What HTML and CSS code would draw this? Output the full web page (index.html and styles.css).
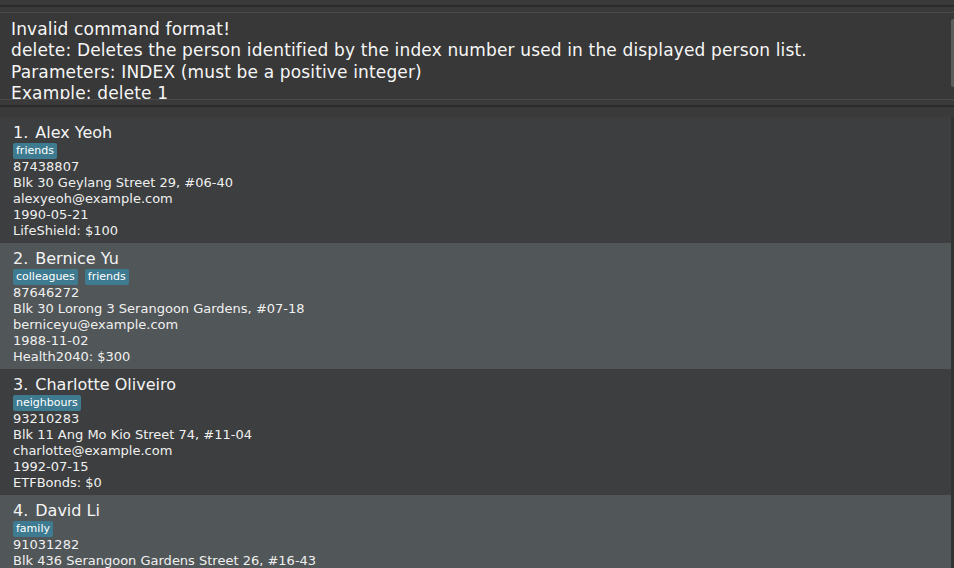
FILE: index.html
```html
<!DOCTYPE html>
<html lang="en">
<head>
<meta charset="utf-8">
<title>Address Book</title>
<link rel="stylesheet" href="styles.css">
</head>
<body>
<div class="app">
  <div class="strip strip-top"></div>
  <div class="sep-dark"></div>
  <div class="strip strip-mid"></div>
  <div class="result-pane">
    <div class="result-text">
      <div class="result-line">Invalid command format!</div>
      <div class="result-line">delete: Deletes the person identified by the index number used in the displayed person list.</div>
      <div class="result-line">Parameters: INDEX (must be a positive integer)</div>
      <div class="result-line">Example: delete 1</div>
    </div>
    <div class="scroll-thumb"></div>
  </div>
  <div class="strip strip-low"></div>
  <div class="sep-dark"></div>
  <div class="list-pane">
    <div class="list">
      <div class="card card-even">
        <div class="name"><span class="idx">1.</span>Alex Yeoh</div>
        <div class="tags"><span class="tag">friends</span></div>
        <div class="detail">87438807</div>
        <div class="detail">Blk 30 Geylang Street 29, #06-40</div>
        <div class="detail">alexyeoh@example.com</div>
        <div class="detail">1990-05-21</div>
        <div class="detail">LifeShield: $100</div>
      </div>
      <div class="card card-odd">
        <div class="name"><span class="idx">2.</span>Bernice Yu</div>
        <div class="tags"><span class="tag">colleagues</span><span class="tag">friends</span></div>
        <div class="detail">87646272</div>
        <div class="detail">Blk 30 Lorong 3 Serangoon Gardens, #07-18</div>
        <div class="detail">berniceyu@example.com</div>
        <div class="detail">1988-11-02</div>
        <div class="detail">Health2040: $300</div>
      </div>
      <div class="card card-even">
        <div class="name"><span class="idx">3.</span>Charlotte Oliveiro</div>
        <div class="tags"><span class="tag">neighbours</span></div>
        <div class="detail">93210283</div>
        <div class="detail">Blk 11 Ang Mo Kio Street 74, #11-04</div>
        <div class="detail">charlotte@example.com</div>
        <div class="detail">1992-07-15</div>
        <div class="detail">ETFBonds: $0</div>
      </div>
      <div class="card card-odd">
        <div class="name"><span class="idx">4.</span>David Li</div>
        <div class="tags"><span class="tag">family</span></div>
        <div class="detail">91031282</div>
        <div class="detail">Blk 436 Serangoon Gardens Street 26, #16-43</div>
        <div class="detail">lidavid@example.com</div>
        <div class="detail">1985-02-10</div>
        <div class="detail">Medisave: $50</div>
      </div>
    </div>
    <div class="list-track"></div>
  </div>
</div>
</body>
</html>
```
FILE: styles.css
```css
* { box-sizing: border-box; }
html, body {
  margin: 0;
  padding: 0;
  background: #383838;
  overflow: hidden;
}
.app {
  width: 954px;
  height: 568px;
  display: flex;
  flex-direction: column;
  overflow: hidden;
  font-family: "DejaVu Sans", "Liberation Sans", sans-serif;
  color: #ffffff;
}
.strip { background: #3a3a3a; flex: none; }
.strip-top { height: 5px; }
.strip-mid { height: 5px; }
.strip-low { border-top: 1px solid #4a4a4a; height: 6px; }
.sep-dark { height: 2px; background: #2b2b2b; flex: none; }
.result-pane {
  flex: none;
  height: 87px;
  border-top: 1px solid #4a4a4a;
  background: #383838;
  position: relative;
  overflow: hidden;
}
.result-text {
  padding: 6px 0 0 11px;
  font-size: 17px;
  line-height: 21.4px;
  letter-spacing: 0.15px;
  color: #f6f6f6;
  white-space: nowrap;
}
.scroll-thumb {
  position: absolute;
  right: 0;
  top: 6px;
  width: 3px;
  height: 68px;
  background: #5c5c5c;
  border-radius: 2px 0 0 2px;
}
.list-pane {
  flex: 1;
  display: flex;
  padding-top: 10px;
  background: #3a3a3a;
  min-height: 0;
}
.list {
  flex: 1;
  display: flex;
  flex-direction: column;
  overflow: hidden;
}
.list-track {
  width: 3px;
  flex: none;
  background: #333333;
}
.card {
  flex: none;
  padding: 6px 0 4px 13px;
  color: #f0f0f0;
}
.card-even { background: #3c3e3f; }
.card-odd { background: #515658; }
.name {
  font-size: 16px;
  line-height: 19px;
  color: #f4f4f4;
}
.idx { margin-right: 7px; }
.tags {
  display: flex;
  gap: 7px;
  margin-top: 1px;
  height: 16px;
}
.tag {
  background: #3e7b91;
  color: #ffffff;
  font-size: 11px;
  line-height: 16px;
  padding: 0 3px;
  border-radius: 2px;
}
.detail {
  font-size: 13px;
  line-height: 16px;
  white-space: nowrap;
}
```
